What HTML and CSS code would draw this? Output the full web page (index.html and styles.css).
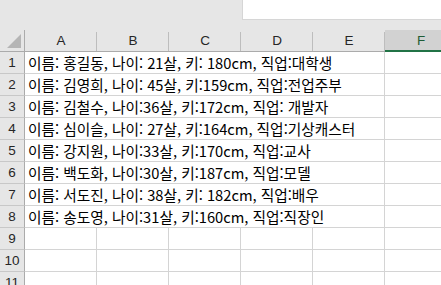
FILE: index.html
```html
<!DOCTYPE html>
<html lang="ko">
<head>
<meta charset="utf-8">
<link rel="stylesheet" href="styles.css">
</head>
<body>
<div class="topbar"><div class="formula"></div></div>
<div class="sheet">
  <div class="corner"><span class="tri"></span></div>
  <div class="colh">A</div>
  <div class="colh">B</div>
  <div class="colh">C</div>
  <div class="colh">D</div>
  <div class="colh">E</div>
  <div class="colh sel">F</div>

  <div class="rowh">1</div><div class="cell text">이름: 홍길동, 나이: 21살, 키: 180cm, 직업:대학생</div><div class="cell"></div>
  <div class="rowh">2</div><div class="cell text">이름: 김영희, 나이: 45살, 키:159cm, 직업:전업주부</div><div class="cell"></div>
  <div class="rowh">3</div><div class="cell text">이름: 김철수, 나이:36살, 키:172cm, 직업: 개발자</div><div class="cell"></div>
  <div class="rowh">4</div><div class="cell text">이름: 심이슬, 나이: 27살, 키:164cm, 직업:기상캐스터</div><div class="cell"></div>
  <div class="rowh">5</div><div class="cell text">이름: 강지원, 나이:33살, 키:170cm, 직업:교사</div><div class="cell"></div>
  <div class="rowh">6</div><div class="cell text">이름: 백도화, 나이:30살, 키:187cm, 직업:모델</div><div class="cell"></div>
  <div class="rowh">7</div><div class="cell text">이름: 서도진, 나이: 38살, 키: 182cm, 직업:배우</div><div class="cell"></div>
  <div class="rowh">8</div><div class="cell text">이름: 송도영, 나이:31살, 키:160cm, 직업:직장인</div><div class="cell"></div>

  <div class="rowh">9</div><div class="cell"></div><div class="cell"></div><div class="cell"></div><div class="cell"></div><div class="cell"></div><div class="cell"></div>
  <div class="rowh">10</div><div class="cell"></div><div class="cell"></div><div class="cell"></div><div class="cell"></div><div class="cell"></div><div class="cell"></div>
  <div class="rowh">11</div><div class="cell"></div><div class="cell"></div><div class="cell"></div><div class="cell"></div><div class="cell"></div><div class="cell"></div>
</div>
</body>
</html>
```
FILE: styles.css
```css
html, body {
  margin: 0;
  padding: 0;
  background: #ffffff;
  overflow: hidden;
}
body {
  width: 441px;
  height: 285px;
  font-family: "Noto Sans CJK KR", "Noto Sans", sans-serif;
}
.topbar {
  height: 30px;
  background: #e6e6e6;
  display: flex;
  padding-left: 242px;
  box-sizing: border-box;
}
.formula {
  flex: 1;
  height: 20px;
  background: #ffffff;
  border-left: 1px solid #d6d6d6;
  border-bottom: 1px solid #d6d6d6;
  box-sizing: border-box;
}
.sheet {
  display: grid;
  grid-template-columns: 25px repeat(6, 72px);
  grid-template-rows: 22px;
  grid-auto-rows: 22px;
}
.corner {
  background: #e6e6e6;
  border-right: 1px solid #ababab;
  border-bottom: 1px solid #ababab;
  box-sizing: border-box;
  position: relative;
}
.tri {
  position: absolute;
  right: 3px;
  bottom: 3px;
  width: 0;
  height: 0;
  border-style: solid;
  border-width: 0 0 14px 14px;
  border-color: transparent transparent #b5b5b5 transparent;
}
.colh {
  background: #e6e6e6;
  border-bottom: 1px solid #ababab;
  box-sizing: border-box;
  display: flex;
  align-items: center;
  justify-content: center;
  font-family: "Liberation Sans", Arial, sans-serif;
  font-size: 13.5px;
  color: #262626;
  position: relative;
}
.colh::after {
  content: "";
  position: absolute;
  right: 0;
  top: 2px;
  bottom: 0;
  width: 1px;
  background: #bdbdbd;
}
.colh.sel {
  background: #d2d2d2;
  color: #1e5c35;
  border-bottom: 2px solid #217346;
}
.colh.sel::after { display: none; }
.rowh {
  background: #e6e6e6;
  border-right: 1px solid #ababab;
  border-bottom: 1px solid #c8c8c8;
  box-sizing: border-box;
  display: flex;
  align-items: center;
  justify-content: center;
  font-family: "Liberation Sans", Arial, sans-serif;
  font-size: 13.5px;
  color: #262626;
}
.cell {
  border-right: 1px solid #d4d4d4;
  border-bottom: 1px solid #d4d4d4;
  box-sizing: border-box;
  background: #ffffff;
}
.text {
  grid-column: span 5;
  white-space: nowrap;
  font-size: 14.7px;
  line-height: 21px;
  padding-left: 3px;
  color: #000000;
}
```
